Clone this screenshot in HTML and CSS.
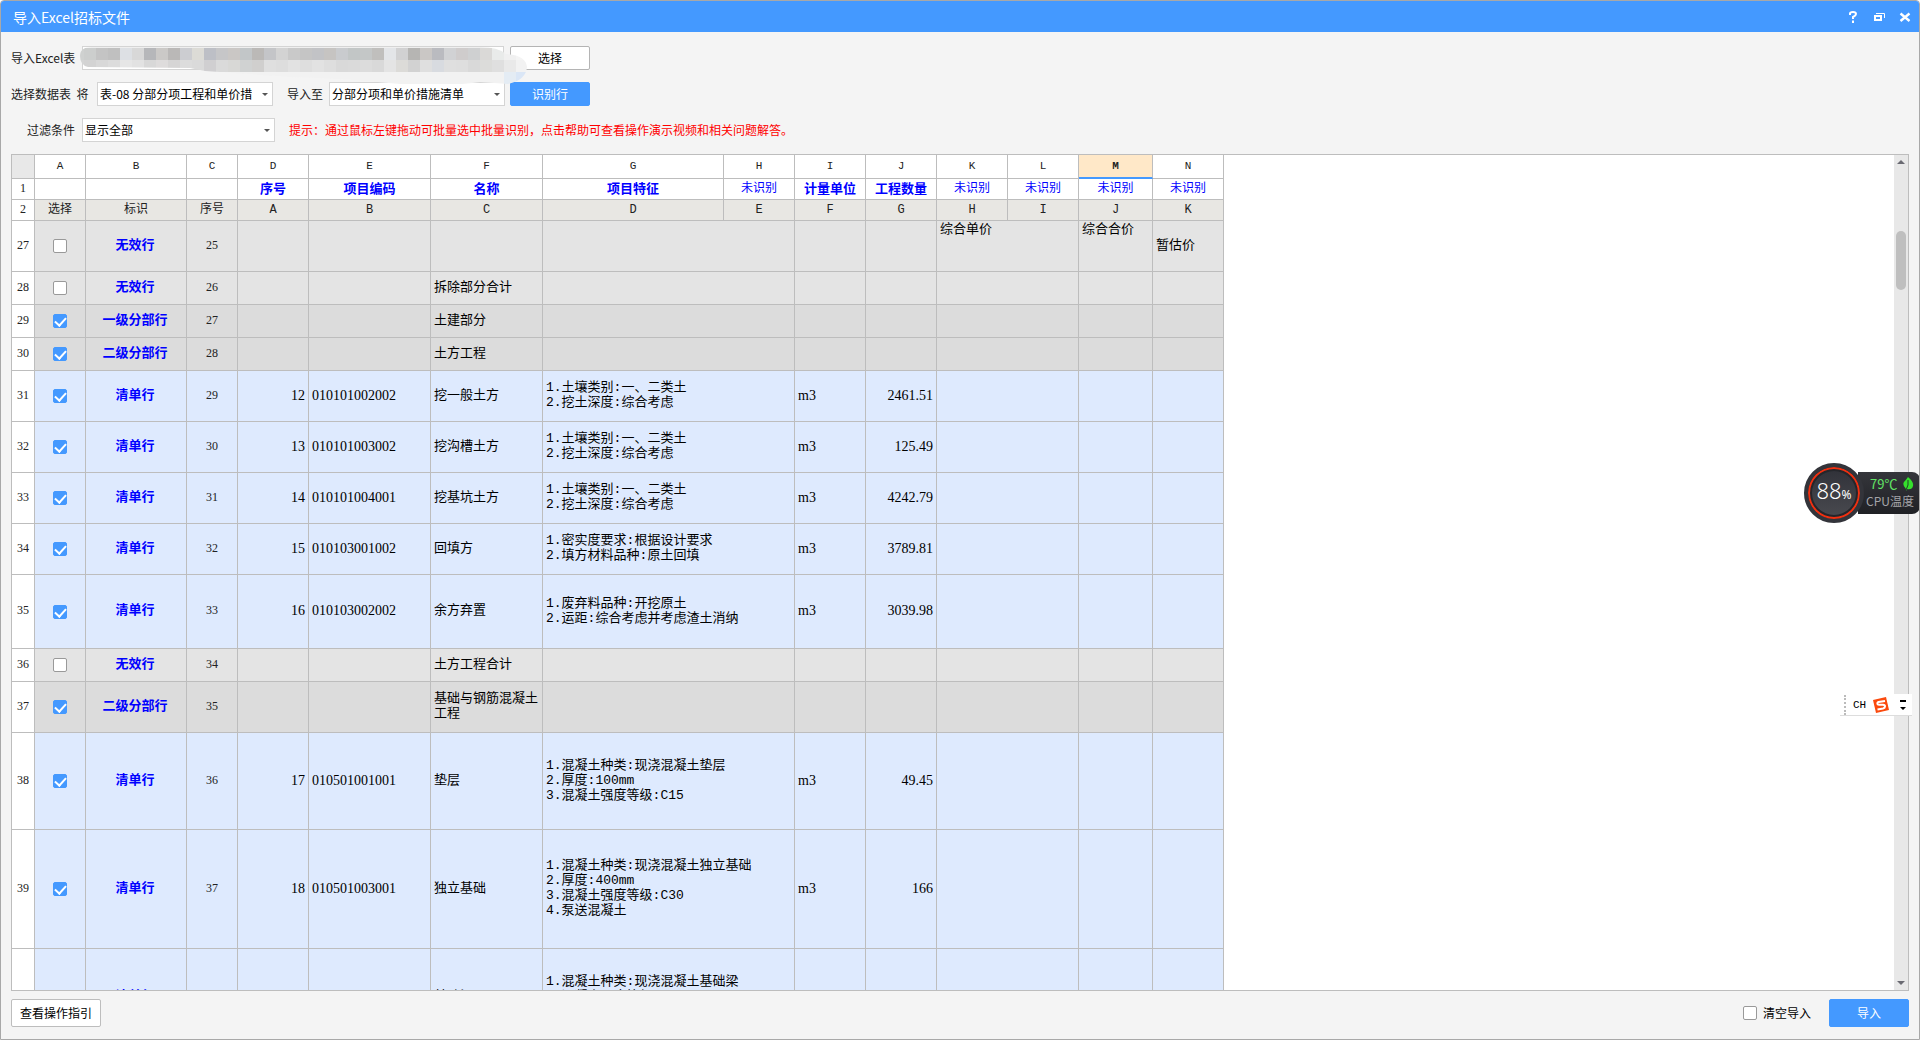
FILE: index.html
```html
<!DOCTYPE html>
<html lang="zh-CN">
<head>
<meta charset="utf-8">
<title>导入Excel招标文件</title>
<link rel="stylesheet" href="styles.css">
</head>
<body>
<div class="window">
  <header class="titlebar">
    <h1>导入Excel招标文件</h1>
    <div class="window-buttons">
      <button type="button" aria-label="帮助"><svg width="12" height="12" viewBox="0 0 12 12"><path d="M3 4V2.5Q3 1 6 1T9 3Q9 4.500 6 6v2M6 9.500V12" fill="none" stroke="#fff" stroke-width="2"/></svg></button>
      <button type="button" aria-label="还原"><svg width="12" height="12" viewBox="0 0 12 12"><path d="M3 2.500h8.500V7" fill="none" stroke="#fff"/><path d="M2 5h6v4H2z" fill="none" stroke="#fff" stroke-width="2"/></svg></button>
      <button type="button" aria-label="关闭"><svg width="12" height="12" viewBox="0 0 12 12"><path d="M1.500 2.500l9 7.500M10.500 2.500l-9 7.500" fill="none" stroke="#fff" stroke-width="2.400"/></svg></button>
    </div>
  </header>

  <form class="options">
    <div class="line">
      <label class="label-file" for="file">导入Excel表</label>
      <div class="file-box">
        <input id="file" class="file" type="text" readonly>
        <svg class="mosaic" width="456" height="44" viewBox="72 43 456 44" aria-hidden="true">
          <clipPath id="brush"><path d="M80 56Q80 47 92 47L480 47Q498 47 506 54Q526 55 527 67Q526 80 508 84L480 82Q450 87 400 84Q340 78 290 77L205 71L190 68L88 67Q80 65 80 56z"/></clipPath>
          <g id="blocks" clip-path="url(#brush)"></g>
        </svg>
      </div>
      <button type="button" class="btn">选择</button>
    </div>
    <div class="line">
      <label class="label-sheet" for="sheet">选择数据表&nbsp; 将</label>
      <span class="select sheet"><select id="sheet"><option>表-08 分部分项工程和单价措施项目清单</option></select></span>
      <label class="label-target" for="target">导入至</label>
      <span class="select sheet"><select id="target"><option>分部分项和单价措施清单</option></select></span>
      <button type="button" class="btn primary">识别行</button>
    </div>
    <div class="line">
      <label class="label-filter" for="filter">过滤条件</label>
      <span class="select filter"><select id="filter"><option>显示全部</option></select></span>
      <p class="hint">提示：通过鼠标左键拖动可批量选中批量识别，点击帮助可查看操作演示视频和相关问题解答。</p>
    </div>
  </form>

  <main class="sheet-view">
    <div class="sheet-scroll">
      <table class="grid">
        <colgroup>
          <col class="w-head"><col class="w-a"><col class="w-b"><col class="w-a"><col class="w-n"><col class="w-e"><col class="w-f"><col class="w-g"><col class="w-n"><col class="w-n"><col class="w-n"><col class="w-n"><col class="w-n"><col class="w-m"><col class="w-n">
        </colgroup>
        <thead>
          <tr class="letters"><th class="corner"></th><th>A</th><th>B</th><th>C</th><th>D</th><th>E</th><th>F</th><th>G</th><th>H</th><th>I</th><th>J</th><th>K</th><th>L</th><th class="current">M</th><th>N</th></tr>
          <tr class="fields"><th class="num">1</th><td></td><td></td><td></td><td class="known">序号</td><td class="known">项目编码</td><td class="known">名称</td><td class="known">项目特征</td><td>未识别</td><td class="known">计量单位</td><td class="known">工程数量</td><td>未识别</td><td>未识别</td><td>未识别</td><td>未识别</td></tr>
          <tr class="source"><th class="num">2</th><td>选择</td><td>标识</td><td>序号</td><td>A</td><td>B</td><td>C</td><td>D</td><td>E</td><td>F</td><td>G</td><td>H</td><td>I</td><td>J</td><td>K</td></tr>
        </thead>
        <tbody>
          <tr class="invalid h2"><th>27</th><td class="tick"><input type="checkbox" aria-label="第27行"></td><td class="kind">无效行</td><td class="seq">25</td><td></td><td></td><td></td><td colspan="2"></td><td></td><td></td><td class="top" colspan="2">综合单价</td><td class="top">综合合价</td><td>暂估价</td></tr>
          <tr class="invalid h1"><th>28</th><td class="tick"><input type="checkbox" aria-label="第28行"></td><td class="kind">无效行</td><td class="seq">26</td><td></td><td></td><td>拆除部分合计</td><td colspan="2"></td><td></td><td></td><td colspan="2"></td><td></td><td></td></tr>
          <tr class="section h1"><th>29</th><td class="tick"><input type="checkbox" aria-label="第29行" checked></td><td class="kind">一级分部行</td><td class="seq">27</td><td></td><td></td><td>土建部分</td><td colspan="2"></td><td></td><td></td><td colspan="2"></td><td></td><td></td></tr>
          <tr class="section h1"><th>30</th><td class="tick"><input type="checkbox" aria-label="第30行" checked></td><td class="kind">二级分部行</td><td class="seq">28</td><td></td><td></td><td>土方工程</td><td colspan="2"></td><td></td><td></td><td colspan="2"></td><td></td><td></td></tr>
          <tr class="item h2"><th>31</th><td class="tick"><input type="checkbox" aria-label="第31行" checked></td><td class="kind">清单行</td><td class="seq">29</td><td class="qty">12</td><td class="code">010101002002</td><td>挖一般土方</td><td colspan="2">1.土壤类别:一、二类土<br>2.挖土深度:综合考虑</td><td class="code">m3</td><td class="qty">2461.51</td><td colspan="2"></td><td></td><td></td></tr>
          <tr class="item h2"><th>32</th><td class="tick"><input type="checkbox" aria-label="第32行" checked></td><td class="kind">清单行</td><td class="seq">30</td><td class="qty">13</td><td class="code">010101003002</td><td>挖沟槽土方</td><td colspan="2">1.土壤类别:一、二类土<br>2.挖土深度:综合考虑</td><td class="code">m3</td><td class="qty">125.49</td><td colspan="2"></td><td></td><td></td></tr>
          <tr class="item h2"><th>33</th><td class="tick"><input type="checkbox" aria-label="第33行" checked></td><td class="kind">清单行</td><td class="seq">31</td><td class="qty">14</td><td class="code">010101004001</td><td>挖基坑土方</td><td colspan="2">1.土壤类别:一、二类土<br>2.挖土深度:综合考虑</td><td class="code">m3</td><td class="qty">4242.79</td><td colspan="2"></td><td></td><td></td></tr>
          <tr class="item h2"><th>34</th><td class="tick"><input type="checkbox" aria-label="第34行" checked></td><td class="kind">清单行</td><td class="seq">32</td><td class="qty">15</td><td class="code">010103001002</td><td>回填方</td><td colspan="2">1.密实度要求:根据设计要求<br>2.填方材料品种:原土回填</td><td class="code">m3</td><td class="qty">3789.81</td><td colspan="2"></td><td></td><td></td></tr>
          <tr class="item h3"><th>35</th><td class="tick"><input type="checkbox" aria-label="第35行" checked></td><td class="kind">清单行</td><td class="seq">33</td><td class="qty">16</td><td class="code">010103002002</td><td>余方弃置</td><td colspan="2">1.废弃料品种:开挖原土<br>2.运距:综合考虑并考虑渣土消纳</td><td class="code">m3</td><td class="qty">3039.98</td><td colspan="2"></td><td></td><td></td></tr>
          <tr class="invalid h1"><th>36</th><td class="tick"><input type="checkbox" aria-label="第36行"></td><td class="kind">无效行</td><td class="seq">34</td><td></td><td></td><td>土方工程合计</td><td colspan="2"></td><td></td><td></td><td colspan="2"></td><td></td><td></td></tr>
          <tr class="section h2"><th>37</th><td class="tick"><input type="checkbox" aria-label="第37行" checked></td><td class="kind">二级分部行</td><td class="seq">35</td><td></td><td></td><td>基础与钢筋混凝土工程</td><td colspan="2"></td><td></td><td></td><td colspan="2"></td><td></td><td></td></tr>
          <tr class="item h4"><th>38</th><td class="tick"><input type="checkbox" aria-label="第38行" checked></td><td class="kind">清单行</td><td class="seq">36</td><td class="qty">17</td><td class="code">010501001001</td><td>垫层</td><td colspan="2">1.混凝土种类:现浇混凝土垫层<br>2.厚度:100mm<br>3.混凝土强度等级:C15</td><td class="code">m3</td><td class="qty">49.45</td><td colspan="2"></td><td></td><td></td></tr>
          <tr class="item h5"><th>39</th><td class="tick"><input type="checkbox" aria-label="第39行" checked></td><td class="kind">清单行</td><td class="seq">37</td><td class="qty">18</td><td class="code">010501003001</td><td>独立基础</td><td colspan="2">1.混凝土种类:现浇混凝土独立基础<br>2.厚度:400mm<br>3.混凝土强度等级:C30<br>4.泵送混凝土</td><td class="code">m3</td><td class="qty">166</td><td colspan="2"></td><td></td><td></td></tr>
          <tr class="item h4"><th></th><td class="tick"><input type="checkbox" aria-label="第40行" checked></td><td class="kind">清单行</td><td class="seq"></td><td></td><td></td><td>基础梁</td><td colspan="2">1.混凝土种类:现浇混凝土基础梁<br>2.混凝土强度等级:C30<br>3.泵送混凝土</td><td></td><td></td><td colspan="2"></td><td></td><td></td></tr>
        </tbody>
      </table>
    </div>
    <div class="scrollbar" aria-hidden="true">
      <i class="arrow up"></i>
      <div class="track"><div class="thumb"></div></div>
      <i class="arrow down"></i>
    </div>
  </main>

  <footer class="actions">
    <button type="button" class="btn guide">查看操作指引</button>
    <label class="clear"><input type="checkbox">清空导入</label>
    <button type="button" class="btn primary">导入</button>
  </footer>

  <aside class="monitor">
    <div class="dial"><span>88</span><small>%</small></div>
    <div class="temp">
      <b>79℃ <svg width="11" height="14" viewBox="0 0 11 14"><path d="M5 0Q11 5 10 9T4 12L3 14L3 12Q-1 8 1 5Q3 3 5 0z" fill="#35e02c"/><path d="M5 3Q6 8 3 13" fill="none" stroke="#23402a"/></svg></b>
      <span>CPU温度</span>
    </div>
  </aside>

  <aside class="ime">
    <span>CH</span>
    <svg width="16" height="16" viewBox="0 0 16 16"><path d="M0 3L13 0L16 13L3 16z" fill="#fb4a0e"/><path d="M12 4L5.500 5Q4 5.500 4.500 7Q5 8 7 7.800L10 7.800Q12 8 12 9.500Q12 11 10 11.500L4.500 12.500" fill="none" stroke="#fff" stroke-width="2"/></svg>
    <svg width="6" height="10" viewBox="0 0 6 10"><path d="M0 0h6v2H0zM0 7h6l-3 3z"/></svg>
  </aside>
</div>
<script src="mosaic.js"></script>
</body>
</html>
```

FILE: mosaic.js
```js
// Fills the redacted file path with 12px colour blocks.
const rows = [
  "cfd1d0 cccecd c4c4c4 c0c0c0 dde0e4 d8d8d8 b6b7ba cbc9c7 bab8b7 cccdd1 dcdbd6 bdbfc6 c6c6c8 cac7c5 c2c6c8 bbb9b7 c4c5c8 d3d3d3 c9c9c9 c5c5c5 c2c3c6 c6c4c2 c9cbce c2c6c6 c4c7c7 c0bfbd e3e5e8 d1d1d2 b6b5b3 cac7c5 babbc0 d1d2d4 cfcccc cfd0d1 dad9d7 e9ebea f0f0f0 f4f4f4",
  "d4d5d5 d3d3d3 d8d8d8 dcdcdc e6e6e6 e2e2e2 d8d8d8 dedcdc d6d5d5 dcdcdc dadada d0cfd1 dadada d8d8d6 d0d2d2 d0cfce dfdfdf dddddd e2e2e2 dedede e2e2e2 dedede d9d9d9 dadada dcdcdc d9d9d9 e4e4e4 dcdbd8 d2d2d2 dfdfdf d8dbe0 dfdfdf dedede d9d9d9 dcdcda dfdfdf e9e9e9 f2f2f2"
].map(r => r.split(" "));
rows.unshift(rows[0].map(() => "efefef"));
rows.push(rows[0].map((c, i) => i === 36 ? "e4ecf4" : i === 37 ? "dae6f6" : "f2f2f2"));
const blocks = document.getElementById("blocks");
rows.forEach((row, y) => row.forEach((color, x) => {
  const r = document.createElementNS("http://www.w3.org/2000/svg", "rect");
  r.setAttribute("x", 72 + x * 12);
  r.setAttribute("y", 36 + y * 12);
  r.setAttribute("width", 12);
  r.setAttribute("height", 12);
  r.setAttribute("fill", "#" + color);
  blocks.appendChild(r);
}));
```

FILE: styles.css
```css
* { box-sizing: border-box; }

body {
  margin: 0;
  font: 12px/18px "Noto Sans CJK SC", sans-serif;
  color: #222;
}

button, input, select { font: inherit; color: inherit; margin: 0; }

.window {
  position: relative;
  display: flex;
  flex-direction: column;
  height: 100vh;
  overflow: hidden;
  border: 1px solid #a8a8a8;
  border-radius: 4px 4px 0 0;
  background: #f4f4f4;
}

/* Title bar */
.titlebar {
  display: flex;
  justify-content: space-between;
  align-items: center;
  height: 31px;
  padding: 0 8px 0 12px;
  background: #4499ff;
  color: #fff;
}
.titlebar h1 { margin: 0; font-size: 14px; font-weight: 400; line-height: 20px; }
.window-buttons { display: flex; gap: 14px; }
.window-buttons button {
  display: flex;
  width: 12px;
  height: 12px;
  padding: 0;
  border: 0;
  background: none;
}

/* Import options */
.options {
  display: flex;
  flex-direction: column;
  gap: 12px;
  padding: 14px 10px 12px;
}
.line { display: flex; align-items: center; height: 24px; }
.label-file, .label-filter { width: 71px; white-space: nowrap; }
.label-filter { padding-left: 16px; }
.label-sheet { width: 86px; white-space: nowrap; }
.label-target { margin: 0 6px 0 14px; }
.file-box { position: relative; width: 422px; height: 24px; margin-right: 6px; }
.file {
  width: 100%;
  height: 100%;
  border: 1px solid #d4d4d4;
  background: #fff;
}
.mosaic { position: absolute; left: -10px; top: -3px; z-index: 1; }

.select { position: relative; height: 24px; }
.select.sheet { width: 176px; }
.select.filter { width: 193px; }
.select select {
  width: 100%;
  height: 24px;
  padding: 0 20px 0 2px;
  border: 1px solid #d4d4d4;
  border-radius: 0;
  appearance: none;
  background: #fff;
  color: #000;
  text-overflow: clip;
}
.select::after {
  content: "";
  position: absolute;
  right: 5px;
  top: 11px;
  border: 3px solid transparent;
  border-top-color: #555;
  border-bottom: 0;
}

.btn {
  width: 80px;
  height: 24px;
  padding: 0;
  border: 1px solid #b4b4b4;
  border-radius: 2px;
  background: #fff;
  color: #000;
}
.btn.primary { border-color: #4499ff; background: #4499ff; color: #fff; }
.line .primary { margin-left: 5px; }
.hint { margin: 0 0 0 14px; color: #f00; }

input[type="checkbox"] {
  display: block;
  width: 14px;
  height: 14px;
  border: 1px solid #999;
  border-radius: 2px;
  appearance: none;
  background: #fff;
}
input[type="checkbox"]:checked { border-color: #4499ff; background: #4499ff; }
input[type="checkbox"]:checked::after {
  content: "";
  display: block;
  width: 5px;
  height: 9px;
  margin: 0 auto;
  border: solid #fff;
  border-width: 0 2px 2px 0;
  transform: rotate(42deg);
}

/* Spreadsheet */
.sheet-view {
  display: flex;
  flex: 1;
  min-height: 0;
  margin: 0 10px;
  border: 1px solid #bdbdbd;
  background: #fff;
}
.sheet-scroll { flex: 1; min-width: 0; overflow: hidden; }

.grid {
  width: 1212px;
  table-layout: fixed;
  border-spacing: 0;
  font: 13px/15px "Liberation Mono", "Noto Sans CJK SC", monospace;
  color: #000;
}
.w-head { width: 23px; }
.w-a { width: 51px; }
.w-b { width: 101px; }
.w-n { width: 71px; }
.w-e { width: 122px; }
.w-f { width: 112px; }
.w-g { width: 181px; }
.w-m { width: 74px; }

.grid th, .grid td {
  padding: 0 3px 2px;
  border: solid #bdbdbd;
  border-width: 0 1px 1px 0;
  text-align: left;
}
.grid th, .source td, .grid .seq {
  padding: 0 0 2px;
  font: 12px/15px "Liberation Serif", "Noto Sans CJK SC", serif;
  text-align: center;
  color: #222;
}
.grid th { background: #fff; }
.letters { height: 24px; }
.grid .letters th, .grid .source td {
  padding: 0;
  font-family: "Liberation Mono", "Noto Sans CJK SC", monospace;
}
.grid .letters th { font-size: 11px; }
.grid .corner { background: #e8e8e8; }
.grid .letters .current {
  border-bottom: 2px solid #4499ff;
  background: #ffe8c8;
  font-weight: 700;
}
.fields, .source { height: 21px; }
.grid .fields td { padding: 0; font-size: 12px; text-align: center; color: #00f; }
.grid .fields .known { font-size: 13px; font-weight: 700; }
.source td { background: #e8e7e3; }

.h1 { height: 33px; }
.h2 { height: 51px; }
.h3 { height: 74px; }
.h4 { height: 97px; }
.h5 { height: 119px; }
.invalid { background: #e4e4e4; }
.section { background: #dcdcdc; }
.item { background: #deeafe; }

.grid .tick { padding: 0 18px; }
.grid .kind { padding: 0 2px 2px 0; font-weight: 700; text-align: center; color: #00f; }
.grid .code, .grid .qty {
  font-family: "Liberation Serif", serif;
  font-size: 14px;
}
.grid .qty { text-align: right; }
.grid .top { padding-top: 1px; vertical-align: top; }

.scrollbar {
  display: flex;
  flex-direction: column;
  align-items: center;
  width: 14px;
  padding: 5px 0;
  background: #e8e8e8;
}
.track { flex: 1; padding-top: 67px; }
.thumb { width: 10px; height: 59px; border-radius: 5px; background: #bfbfbf; }
.arrow { border: 4px solid transparent; }
.arrow.up { border-top: 0; border-bottom-color: #6a6a72; }
.arrow.down { border-bottom: 0; border-top-color: #6a6a72; }

/* Footer */
.actions {
  display: flex;
  align-items: center;
  height: 48px;
  padding: 0 10px 4px;
}
.actions .btn { height: 28px; }
.actions .guide { width: 90px; border-color: #bdbdbd; }
.clear {
  display: flex;
  align-items: center;
  gap: 6px;
  margin: 0 18px 0 auto;
  color: #000;
}

/* Desktop widgets floating over the window */
.monitor {
  position: absolute;
  right: -1px;
  top: 462px;
  display: flex;
  align-items: center;
}
.dial {
  z-index: 1;
  display: flex;
  justify-content: center;
  align-items: baseline;
  width: 60px;
  height: 60px;
  padding-top: 7px;
  border: 4px solid #33343a;
  border-radius: 50%;
  background: linear-gradient(#303138, #4a4b50);
  box-shadow: inset 0 0 0 2px #f03010, inset 0 0 0 4px #25262b;
  color: #fff;
}
.dial span { font: 22px/32px "Noto Sans", sans-serif; font-weight: 300; }
.dial small { font: 12px/16px "Noto Sans", sans-serif; }
.temp {
  display: flex;
  flex-direction: column;
  width: 62px;
  height: 42px;
  margin-left: -6px;
  padding: 3px 0 0 8px;
  border-radius: 0 8px 8px 0;
  background: linear-gradient(#35363b, #202125);
  color: #a4a4a8;
}
.temp b {
  display: flex;
  gap: 6px;
  align-items: center;
  padding-left: 4px;
  font-weight: 400;
  font-size: 13px;
  color: #62e466;
}
.temp span { line-height: 16px; }

.ime {
  position: absolute;
  right: 7px;
  top: 693px;
  display: flex;
  align-items: center;
  gap: 7px;
  width: 72px;
  height: 22px;
  padding: 0 6px 0 4px;
  border-bottom: 1px solid #ddd;
  background: #fff;
  color: #000;
}
.ime::before { content: ""; height: 20px; border-left: 2px dotted #bbb; }
.ime span { font: 11px/16px "Liberation Mono", monospace; }
.ime svg:last-child { margin-left: auto; }
```
